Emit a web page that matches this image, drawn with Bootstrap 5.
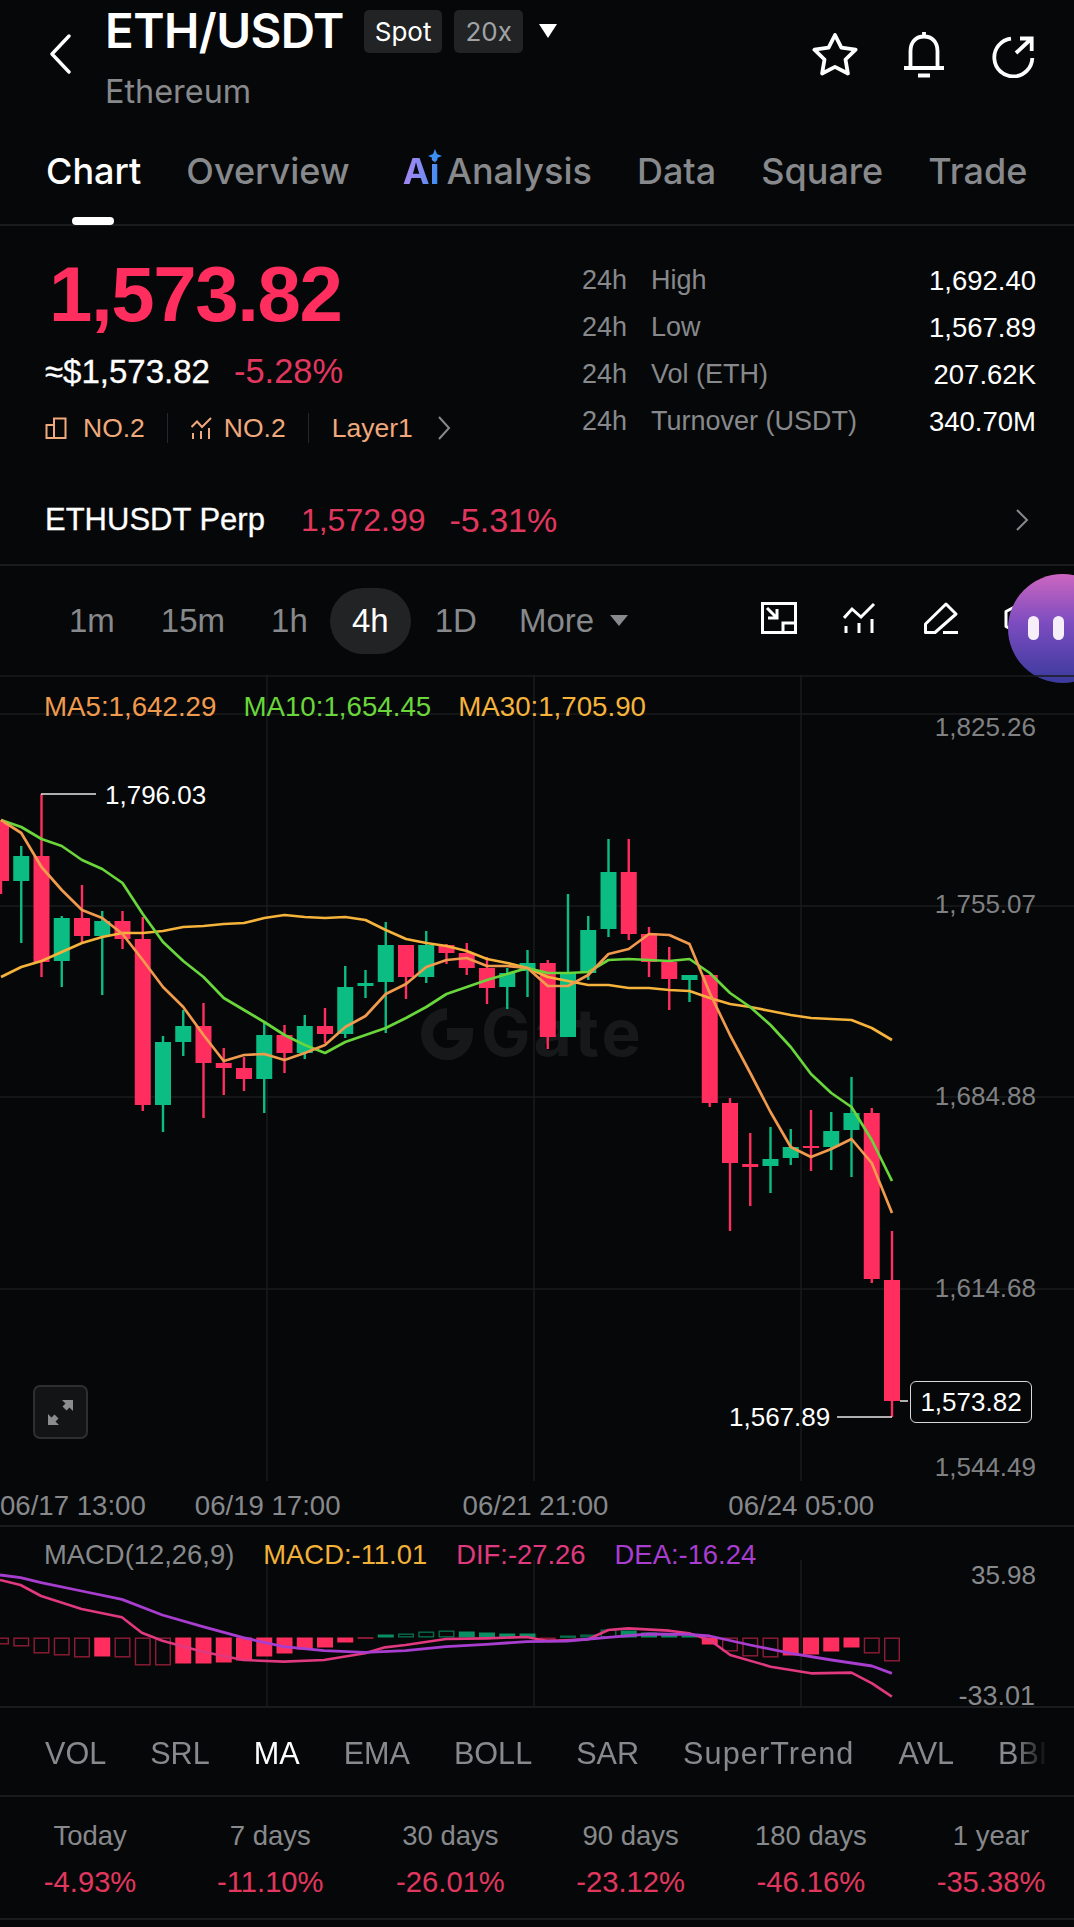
<!DOCTYPE html>
<html lang="en">
<head>
    <meta charset="UTF-8">
    <meta name="viewport" content="width=device-width, initial-scale=1.0">
    <title>ETH/USDT</title>
    <link href="https://cdn.jsdelivr.net/npm/bootstrap@5.3.0/dist/css/bootstrap.min.css" rel="stylesheet">
    <style>
        body {
            background-color: #060708;
            color: #fff;
            font-family: "Liberation Sans", Arial, sans-serif;
            overflow-x: hidden;
        }
        .page { width: 1074px; height: 1927px; overflow: hidden; }
        .ui-font { font-family: Inter, "Liberation Sans", sans-serif; }
        .muted { color: #87898c; }
        .down { color: #e1375f; }
        .rule { border-bottom: 2px solid #1a1b1c; }

        .top-head { height: 130px; padding-left: 49px; padding-right: 38px; }
        .back-icon { margin-top: 34px; margin-right: 34px; }
        .pair-name { font-size: 47.5px; line-height: 60px; font-weight: 600; letter-spacing: -.6px; margin-top: 1px; }
        .pair-tag {
            background-color: #222324;
            font-size: 26px;
            font-weight: 400;
            height: 43px;
            line-height: 43px;
            padding: 0 11px;
            border-radius: 5px;
            margin-left: 20px;
            margin-top: 10px;
        }
        .pair-tag + .pair-tag { margin-left: 12px; color: #a0a3a6; }
        .pair-sub { font-size: 32.4px; line-height: 40px; margin-top: 11px; color: #87898c; }
        .head-actions { gap: 43px; margin-top: 32px; }

        .tab-bar { height: 96px; padding-left: 46px; gap: 45px; }
        .tab-bar .nav-link {
            padding: 0;
            font-size: 36px;
            line-height: 44px;
            margin-top: 19px;
            font-weight: 500;
            color: #87898c;
            height: 44px;
        }
        .tab-bar .nav-link.active { color: #fff; position: relative; }
        .tab-bar .nav-link.active::after {
            content: "";
            position: absolute;
            left: 26px;
            top: 68px;
            width: 42px;
            height: 8px;
            border-radius: 4px;
            background-color: #fff;
        }
        .ai-tab { margin-left: 8px; }
        .ai-mark {
            position: relative;
            margin-right: 7px;
            font-weight: 700;
            background: linear-gradient(100deg, #b184f2, #7c8cf2 55%, #2f8df2);
            -webkit-background-clip: text;
            background-clip: text;
            color: transparent;
        }
        .ai-spark { position: absolute; right: -3px; top: 0; }

        .summary { height: 244px; padding: 0 38px 0 45px; }
        .big-price {
            font-size: 78px;
            line-height: 90px;
            font-weight: 700;
            color: #ff2e5e;
            letter-spacing: -1.4px;
            margin-top: 23px;
            margin-left: 4px;
        }
        .sub-price { font-size: 33px; line-height: 40px; margin-top: 12px; -webkit-text-stroke: .3px; }
        .sub-pct { font-size: 34.5px; -webkit-text-stroke: 0; }
        .rank-row { font-size: 26.5px; line-height: 34px; color: #f0a97c; margin-top: 19px; }
        .rank-sep { width: 1px; height: 30px; background-color: #26272a; margin: 0 22.5px; }
        .rank-ic2 { margin-right: 12px; }
        .stat-col { width: 454px; padding-top: 31px; font-size: 27px; }
        .stat-line { height: 47px; line-height: 47px; }
        .stat-line span:first-child { width: 69px; }
        .stat-line span:last-child { font-size: 27.5px; }

        .perp-row { height: 96px; padding: 6px 45px 0; font-size: 32px; }
        .perp-name { font-size: 31px; margin-right: 36px; -webkit-text-stroke: .3px; }
        .perp-pct { font-size: 34px; }

        .tool-row { height: 109px; position: relative; padding-left: 69px; font-size: 33px; }
        .range-item { line-height: 40px; margin-left: 46px; }
        .range-item:first-child { margin-left: 0; }
        .range-pill {
            background-color: #222324;
            border-radius: 33px;
            height: 66px;
            line-height: 66px;
            width: 81px;
            text-align: center;
            margin-left: 22px;
        }
        .range-pill + .range-item { margin-left: 24px; }
        .range-more { margin-left: 42px; }
        .tool-icons { position: absolute; left: 761px; top: 36px; gap: 46px; }
        .float-ball {
            position: absolute;
            left: 1008px;
            top: 8px;
            width: 109px;
            height: 109px;
            border-radius: 50%;
            background: linear-gradient(180deg, #cc66c0 0%, #7c4cc0 45%, #3a3a9c 100%);
        }
        .float-ball i {
            position: absolute;
            top: 42px;
            width: 11px;
            height: 24px;
            border-radius: 6px;
            background-color: #f6eef9;
        }
        .float-ball i:first-child { left: 20px; }
        .float-ball i:last-child { left: 45px; }

        .chart-box { height: 806px; position: relative; }
        .chart-box svg, .macd-box svg { display: block; overflow: visible; }
        .ma-legend {
            position: absolute;
            left: 44px;
            top: 15px;
            font-size: 27.7px;
            line-height: 34px;
            gap: 27px;
        }
        .ma5 { color: #f09a4e; }
        .ma10 { color: #69d63c; }
        .ma30 { color: #f5b33c; }
        .expand-btn {
            position: absolute;
            left: 33px;
            top: 710px;
            width: 55px;
            height: 54px;
            border: 2px solid #2e2f31;
            border-radius: 7px;
            background-color: #131415;
        }
        .last-box {
            position: absolute;
            left: 910px;
            top: 706px;
            width: 122px;
            height: 42px;
            line-height: 40px;
            border: 1px solid #d8d8d8;
            border-radius: 6px;
            text-align: center;
            font-size: 26px;
            background-color: #060708;
        }

        .date-row { height: 46px; font-size: 27.6px; line-height: 50px; color: #87898c; }
        .date-row span:nth-child(1) { margin-right: 49px; }
        .date-row span:nth-child(2) { margin-right: 122px; }
        .date-row span:nth-child(3) { margin-right: 120px; }

        .macd-box { height: 181px; position: relative; }
        .macd-legend { position: absolute; left: 44px; top: 11px; font-size: 27.4px; line-height: 34px; gap: 29px; }
        .macd-m { color: #f2b138; }
        .macd-dif { color: #e0397f; }
        .macd-dea { color: #a83ed0; }

        .ind-row {
            height: 87px;
            padding: 4px 0 0 45px;
            width: 1050px;
            font-size: 30.6px;
            gap: 44px;
            white-space: nowrap;
            overflow: hidden;
            color: #87898c;
            -webkit-mask-image: linear-gradient(90deg, #000 1015px, transparent 1048px);
            mask-image: linear-gradient(90deg, #000 1015px, transparent 1048px);
        }
        .ind-long { letter-spacing: 1.1px; }
        .ret-row { height: 123px; }
        .ret-cell { width: 180.2px; text-align: center; flex: none; }
        .ret-cell div:first-child { font-size: 27.5px; line-height: 32px; margin-top: 23px; color: #87898c; }
        .ret-cell div:last-child { font-size: 29.2px; line-height: 32px; margin-top: 14px; }
    </style>
</head>
<body>
<div class="page">

    <div class="top-head d-flex align-items-start">
        <svg class="back-icon" width="22" height="40" viewBox="0 0 22 40" fill="none" stroke="#fff" stroke-width="3.4" stroke-linecap="round" stroke-linejoin="round"><path d="M20 2L3 20L20 38"/></svg>
        <div>
            <div class="d-flex align-items-start">
                <span class="pair-name ui-font">ETH/USDT</span>
                <span class="pair-tag ui-font">Spot</span>
                <span class="pair-tag ui-font">20x</span>
                <svg class="ms-3 mt-4" width="18" height="14" viewBox="0 0 18 14"><path d="M0 0H18L9 14Z" fill="#fff"/></svg>
            </div>
            <div class="pair-sub ui-font">Ethereum</div>
        </div>
        <div class="head-actions d-flex ms-auto">
            <svg width="46" height="46" viewBox="0 0 46 46" fill="none" stroke="#fff" stroke-width="3.8" stroke-linejoin="round"><path d="M23 3L29.4 15.6L43.6 17.7L33.5 27.5L35.9 41.5L23 34.9L10.1 41.5L12.5 27.5L2.4 17.7L16.6 15.6Z"/></svg>
            <svg width="46" height="46" viewBox="0 0 46 46" fill="none" stroke="#fff" stroke-width="3.8"><path d="M3 36H43M9.5 36V19C9.5 10 15 4.5 23 4.5S36.5 10 36.5 19V36M23 0V4M17 43.5H29"/></svg>
            <svg width="46" height="46" viewBox="0 0 46 46" fill="none" stroke="#fff" stroke-width="3.8"><path d="M21 6.6A19 19 0 1 0 42.3 26M26 21L41 7M30 6.5H41.7V19"/></svg>
        </div>
    </div>

    <nav class="nav tab-bar rule ui-font">
        <a class="nav-link active" href="#">Chart</a>
        <a class="nav-link" href="#">Overview</a>
        <a class="nav-link ai-tab" href="#"><span class="ai-mark">Ai<svg class="ai-spark" width="14" height="14" viewBox="0 0 14 14"><path d="M7 0L9 5L14 7L9 9L7 14L5 9L0 7L5 5Z" fill="#3b8ff2"/></svg></span>Analysis</a>
        <a class="nav-link" href="#">Data</a>
        <a class="nav-link" href="#">Square</a>
        <a class="nav-link" href="#">Trade</a>
    </nav>

    <div class="summary d-flex justify-content-between">
        <div>
            <div class="big-price">1,573.82</div>
            <div class="sub-price d-flex align-items-baseline gap-4"><span>≈$1,573.82</span><span class="down sub-pct">-5.28%</span></div>
            <div class="rank-row d-flex align-items-center">
                <svg class="me-3" width="22" height="22" viewBox="0 0 22 22" fill="none" stroke="#f0a97c" stroke-width="2"><path d="M9 21H1.5V8H9M9 21V1.5H20.5V21Z"/></svg>
                <span>NO.2</span>
                <span class="rank-sep"></span>
                <svg class="rank-ic2" width="21" height="22" viewBox="0 0 21 22" fill="none" stroke="#f0a97c" stroke-width="2"><path d="M0.5 10L6 4.5L11 10L20 1M2 16V22M10 14V22M18 11V22"/></svg>
                <span>NO.2</span>
                <span class="rank-sep"></span>
                <span>Layer1</span>
                <svg class="ms-4" width="14" height="24" viewBox="0 0 14 24" fill="none" stroke="#87898c" stroke-width="2"><path d="M2 1L12 12L2 23"/></svg>
            </div>
        </div>
        <div class="stat-col">
            <div class="stat-line d-flex muted"><span>24h</span><span>High</span><span class="ms-auto text-white">1,692.40</span></div>
            <div class="stat-line d-flex muted"><span>24h</span><span>Low</span><span class="ms-auto text-white">1,567.89</span></div>
            <div class="stat-line d-flex muted"><span>24h</span><span>Vol (ETH)</span><span class="ms-auto text-white">207.62K</span></div>
            <div class="stat-line d-flex muted"><span>24h</span><span>Turnover (USDT)</span><span class="ms-auto text-white">340.70M</span></div>
        </div>
    </div>

    <div class="perp-row rule d-flex align-items-center">
        <span class="perp-name">ETHUSDT Perp</span>
        <span class="down me-4">1,572.99</span>
        <span class="down perp-pct">-5.31%</span>
        <svg class="ms-auto" width="14" height="22" viewBox="0 0 14 22" fill="none" stroke="#87898c" stroke-width="2"><path d="M2 1L12 11L2 21"/></svg>
    </div>

    <div class="tool-row d-flex align-items-center muted">
        <span class="range-item">1m</span>
        <span class="range-item">15m</span>
        <span class="range-item">1h</span>
        <span class="range-pill text-white">4h</span>
        <span class="range-item">1D</span>
        <span class="range-item range-more">More</span>
        <svg class="ms-3" width="18" height="11" viewBox="0 0 18 11"><path d="M0 0H18L9 11Z" fill="#87898c"/></svg>

        <div class="tool-icons d-flex">
            <svg width="36" height="32" viewBox="0 0 36 32" fill="none" stroke="#fff" stroke-width="3"><path d="M34.5 20V1.5H1.5V30.5H22"/><rect x="22" y="21" width="12.5" height="9.5"/><path d="M6 6L16 16M7 16H16V7"/></svg>
            <svg width="35" height="32" viewBox="0 0 35 32" fill="none" stroke="#fff" stroke-width="3"><path d="M1 16L9 7L18 15L31 2M3 24V31M16 21V31M29 17V31"/></svg>
            <svg width="34" height="32" viewBox="0 0 34 32" fill="none" stroke="#fff" stroke-width="3" stroke-linejoin="round"><path d="M1.5 22L22 2L32 12L11 30.5H1.5ZM19 30.5H34"/></svg>
            <svg width="36" height="34" viewBox="0 0 36 34" fill="none" stroke="#fff" stroke-width="3" stroke-linejoin="round"><path d="M18 1L34 9.500V24.500L18 33L2 24.500V9.500Z"/></svg>
        </div>
        <div class="float-ball"><i></i><i></i></div>
    </div>

    <div class="chart-box">
        <svg id="priceChart" width="1074" height="806" viewBox="0 675 1074 806"></svg>
        <div class="ma-legend d-flex">
            <span class="ma5">MA5:1,642.29</span>
            <span class="ma10">MA10:1,654.45</span>
            <span class="ma30">MA30:1,705.90</span>
        </div>
        <div class="expand-btn d-flex align-items-center justify-content-center">
            <svg width="27" height="27" viewBox="0 0 27 27" fill="#8b8c8e"><path d="M15 1H26V12L22.5 8.5L19.5 11.5L15.5 7.5L18.500 4.500Z"/><path d="M12 26H1V15L4.500 18.500L7.500 15.500L11.500 19.500L8.500 22.500Z"/></svg>
        </div>
        <div class="last-box">1,573.82</div>
    </div>

    <div class="date-row rule d-flex">
        <span>06/17 13:00</span><span>06/19 17:00</span><span>06/21 21:00</span><span>06/24 05:00</span>
    </div>

    <div class="macd-box rule">
        <svg id="macdChart" width="1074" height="181" viewBox="0 1527 1074 181"></svg>
        <div class="macd-legend d-flex">
            <span class="muted">MACD(12,26,9)</span>
            <span class="macd-m">MACD:-11.01</span>
            <span class="macd-dif">DIF:-27.26</span>
            <span class="macd-dea">DEA:-16.24</span>
        </div>
    </div>

    <div class="rule">
        <div class="ind-row d-flex align-items-center">
            <span>VOL</span><span>SRL</span><span class="text-white">MA</span><span>EMA</span><span>BOLL</span><span>SAR</span><span class="ind-long">SuperTrend</span><span>AVL</span><span>BBI</span>
        </div>
    </div>

    <div class="ret-row rule d-flex">
        <div class="ret-cell"><div>Today</div><div class="down">-4.93%</div></div>
        <div class="ret-cell"><div>7 days</div><div class="down">-11.10%</div></div>
        <div class="ret-cell"><div>30 days</div><div class="down">-26.01%</div></div>
        <div class="ret-cell"><div>90 days</div><div class="down">-23.12%</div></div>
        <div class="ret-cell"><div>180 days</div><div class="down">-46.16%</div></div>
        <div class="ret-cell"><div>1 year</div><div class="down">-35.38%</div></div>
    </div>
</div>

<script src="https://cdn.jsdelivr.net/npm/bootstrap@5.3.0/dist/js/bootstrap.bundle.min.js"></script>
<script>
    const RED = '#ff2e5e', GREEN = '#0bbd82';
    const slotX = i => 1 + 20.25 * i;
    const polyline = (pts, color, w) =>
        `<polyline points="${pts.map(p => p.join(',')).join(' ')}" fill="none" stroke="${color}" stroke-width="${w}" stroke-linejoin="round"/>`;
    const hLine = (y, x2 = 1074) => `<line x1="0" x2="${x2}" y1="${y}" y2="${y}" stroke="#1a1b1c" stroke-width="1.5"/>`;
    const vLine = (x, y1, y2) => `<line x1="${x}" x2="${x}" y1="${y1}" y2="${y2}" stroke="#1a1b1c" stroke-width="1.5"/>`;

    // [wick top, body top, body bottom, wick bottom, color], y in page px
    const candles = [
        [820,823,881,894,'r'],[846,856,881,943,'g'],[794,856,962,977,'r'],[916,918,961,987,'g'],
        [885,918,936,943,'r'],[911,921,936,995,'g'],[911,921,939,949,'r'],[917,939,1105,1111,'r'],
        [1036,1042,1105,1132,'g'],[1010,1026,1042,1056,'g'],[1003,1026,1063,1118,'r'],[1048,1063,1068,1095,'r'],
        [1057,1068,1079,1091,'r'],[1023,1035,1079,1113,'g'],[1025,1035,1053,1073,'r'],[1015,1026,1053,1059,'g'],
        [1008,1026,1034,1043,'r'],[966,987,1034,1038,'g'],[970,983,986,998,'g'],[922,945,982,1033,'g'],
        [945,945,977,999,'r'],[931,945,977,983,'g'],[944,945,953,964,'r'],[943,953,968,975,'r'],
        [957,968,988,1004,'r'],[968,973,987,1009,'g'],[950,963,971,997,'g'],[960,963,1037,1049,'r'],
        [894,973,1037,1037,'g'],[916,930,973,980,'g'],[839,872,929,937,'g'],[839,872,934,940,'r'],
        [927,934,962,977,'r'],[947,962,979,1010,'r'],[975,975,980,1002,'g'],[975,975,1103,1107,'r'],
        [1098,1103,1163,1231,'r'],[1133,1164,1167,1206,'r'],[1127,1159,1166,1193,'g'],[1129,1147,1158,1165,'g'],
        [1110,1146,1148,1171,'r'],[1112,1131,1147,1170,'g'],[1077,1113,1130,1177,'g'],[1108,1113,1279,1283,'r'],
        [1231,1280,1401,1417,'r']
    ];
    const ma5 = [820,833,867,890,910,918,934,960,987,1007,1035,1061,1055,1054,1060,1053,1045,1027,1016,994,984,967,960,958,966,966,968,986,986,975,954,949,934,935,944,993,1035,1073,1112,1147,1157,1149,1139,1163,1213];
    const ma10 = [820,827,839,846,860,869,883,914,942,961,977,998,1010,1022,1035,1045,1053,1042,1035,1028,1018,1007,994,987,980,974,968,973,973,972,960,959,960,961,959,973,993,1007,1025,1047,1074,1093,1107,1140,1181];
    const ma30 = [977,967,961,952,943,937,933,933,931,927,926,924,923,918,915,917,918,917,920,930,939,943,946,951,959,963,968,977,981,985,985,988,988,990,991,998,1004,1007,1011,1015,1018,1019,1020,1028,1040];
    const series = arr => arr.map((y, i) => [slotX(i), y]);

    let priceSvg = '';
    [714, 906, 1097, 1289].forEach(y => priceSvg += hLine(y));
    priceSvg += hLine(676);
    [267, 534, 801].forEach(x => priceSvg += vLine(x, 675, 1481));

    // watermark
    priceSvg += `<path d="M447 1014A20 20 0 1 0 467 1034H447" fill="none" stroke="#17181a" stroke-width="12"/>`;
    priceSvg += `<text x="481" y="1056" font-family="Inter, sans-serif" font-weight="700" font-size="66" letter-spacing="3" fill="#17181a">Gate</text>`;

    candles.forEach((c, i) => {
        const x = slotX(i), col = c[4] === 'r' ? RED : GREEN;
        priceSvg += `<rect x="${x - 1.2}" y="${c[0]}" width="2.4" height="${c[3] - c[0]}" fill="${col}"/>`;
        priceSvg += `<rect x="${x - 8}" y="${c[1]}" width="16" height="${c[2] - c[1]}" fill="${col}"/>`;
    });
    priceSvg += polyline(series(ma30), '#f5b33c', 2.7);
    priceSvg += polyline(series(ma10), '#69d63c', 2.7);
    priceSvg += polyline(series(ma5), '#f09a4e', 2.7);

    // price axis
    [['1,825.26',736],['1,755.07',913],['1,684.88',1105],['1,614.68',1297],['1,544.49',1476]].forEach(a => {
        priceSvg += `<text x="1036" y="${a[1]}" text-anchor="end" font-size="26" fill="#808183">${a[0]}</text>`;
    });
    // high / low markers
    priceSvg += `<path d="M41 794H96M837 1417H892M900 1401H908" stroke="#e8e8e8" stroke-width="1.4" fill="none"/>`;
    priceSvg += `<text x="105" y="804" font-size="26" fill="#fff">1,796.03</text>`;
    priceSvg += `<text x="729" y="1426" font-size="26" fill="#fff">1,567.89</text>`;
    document.getElementById('priceChart').innerHTML = priceSvg;

    // MACD bars: signed height from the zero line, second value 1 means hollow
    const zero = 1637.5;
    const bars = [
        [7,1],[9,1],[16,1],[18,1],[20,1],[19,0],[20,1],[28,1],[28,1],[26,0],[26,0],[25,0],[23,0],[19,0],[16,0],[12,0],[10,0],[5,0],[1,0],
        [-3,2],[-4,1],[-6,1],[-7,1],[-6,2],[-5,2],[-4,2],[-4,2],[1,1],[-2,1],[-3,1],[-8,1],[-7,2],[-5,2],[-3,2],[-2,2],
        [7,0],[14,1],[19,1],[20,1],[18,0],[17,0],[14,0],[10,0],[16,1],[24,1]
    ];
    const dea = [[0,195],[30,203],[60,218],[119,243],[178,268],[237,315],[296,350],[355,383],[414,410],[473,422],[533,427],[592,422],[651,410],[710,403],[769,395],[828,393],[888,382],[947,372],[1006,373],[1036,378],[1095,405],[1155,430],[1214,450],[1273,468],[1302,490]];
    const dif = [[0,210],[30,225],[60,258],[119,297],[178,322],[207,368],[237,392],[296,425],[355,450],[414,455],[473,450],[533,430],[562,412],[592,405],[651,387],[710,385],[769,381],[799,393],[858,388],[888,360],[917,355],[977,362],[1006,370],[1036,390],[1066,435],[1125,470],[1184,490],[1243,488],[1273,520],[1302,560]];
    const macdPts = arr => arr.map(p => [p[0] * 0.685, 1510 + p[1] / 3]);

    let macdSvg = '';
    [267, 534, 801].forEach(x => macdSvg += vLine(x, 1560, 1708));
    bars.forEach((b, i) => {
        const x = slotX(i) - 8, h = Math.abs(b[0]), y = b[0] > 0 ? zero : zero - h;
        const col = b[0] > 0 ? RED : GREEN;
        if (b[1] === 1) {
            macdSvg += `<rect x="${x + .7}" y="${y + .7}" width="14.6" height="${Math.max(h - 1.4, 1)}" fill="none" stroke="${col}" stroke-opacity=".55" stroke-width="1.4"/>`;
        } else {
            macdSvg += `<rect x="${x}" y="${y}" width="16" height="${h}" fill="${col}" fill-opacity="${b[0] > 0 ? 1 : .75}"/>`;
        }
    });
    macdSvg += polyline(macdPts(dif), '#e0397f', 2.6);
    macdSvg += polyline(macdPts(dea), '#a83ed0', 2.8);
    macdSvg += `<text x="1036" y="1584" text-anchor="end" font-size="26" fill="#87898c">35.98</text>`;
    macdSvg += `<text x="1035" y="1705" text-anchor="end" font-size="27" fill="#87898c">-33.01</text>`;
    document.getElementById('macdChart').innerHTML = macdSvg;
</script>
</body>
</html>
